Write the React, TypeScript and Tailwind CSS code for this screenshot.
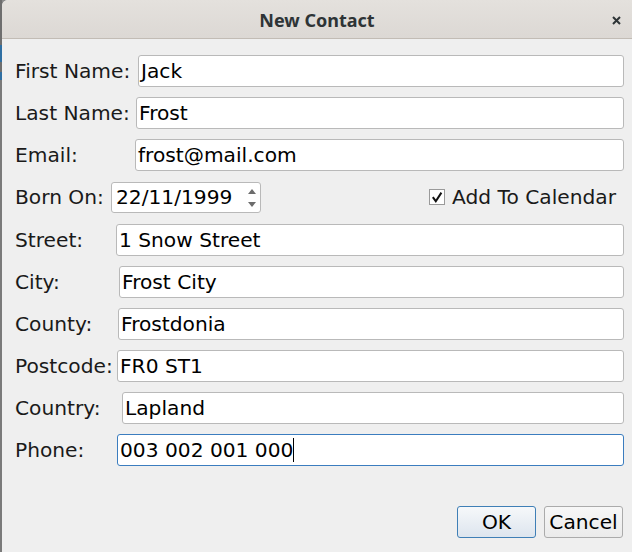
import React from 'react';

const font = { fontFamily: '"DejaVu Sans", "Noto Sans", sans-serif' };

interface FieldRowProps {
    label: string;
    value: string;
    labelClass: string;
    focused?: boolean;
}

function FieldRow({ label, value, labelClass, focused }: FieldRowProps) {
    return (
        <div className="flex items-center h-[32px]">
            <div className={`${labelClass} shrink-0 text-[20.2px] text-[#1a1a1a]`}>{label}</div>
            <div
                className={`flex-1 h-[32px] flex items-center bg-white rounded-[3px] pl-[2px] text-[20.2px] text-black whitespace-nowrap ${
                    focused ? 'border border-[#3b7dbf]' : 'border border-[#b9b9b9]'
                }`}
            >
                <span>{value}</span>
                {focused && <span className="inline-block w-[1px] h-[24px] bg-black" />}
            </div>
        </div>
    );
}

function DateRow() {
    return (
        <div className="flex items-center h-[33px]">
            <div className="w-[96px] shrink-0 text-[20.2px] text-[#1a1a1a]">Born On:</div>
            <div className="w-[150px] h-[31px] flex items-center bg-white border border-[#b9b9b9] rounded-[3px] pl-[4px] text-[20.2px] text-black">
                <span className="flex-1">22/11/1999</span>
                <div className="flex flex-col items-center gap-[8px] pr-[4px]">
                    <svg width="8" height="5" viewBox="0 0 8 5">
                        <polygon points="4,0 8,5 0,5" fill="#6c6c6c" />
                    </svg>
                    <svg width="8" height="5" viewBox="0 0 8 5">
                        <polygon points="0,0 8,0 4,5" fill="#6c6c6c" />
                    </svg>
                </div>
            </div>
            <div className="flex-1" />
            <div className="flex items-center gap-[7px] pr-[8px]">
                <div className="w-[16px] h-[16px] border border-[#9a9a9a] bg-white flex items-center justify-center">
                    <svg width="12" height="12" viewBox="0 0 12 12">
                        <path d="M1.8 6.2 L4.8 10.2 L10.4 1.6" stroke="#111" strokeWidth="2" fill="none" />
                    </svg>
                </div>
                <span className="text-[20.2px] text-[#1a1a1a]">Add To Calendar</span>
            </div>
        </div>
    );
}

export default function App() {
    return (
        <div className="w-[632px] h-[552px] flex bg-[#8a8a8a] overflow-hidden" style={font}>
            <div className="w-[2px] shrink-0 flex flex-col">
                <div className="h-[45px] bg-[#6e6e6e]" />
                <div className="h-[17px] bg-[#2f6fa3]" />
                <div className="h-[10px] bg-[#6e6e6e]" />
                <div className="h-[8px] bg-[#2f6fa3]" />
                <div className="flex-1 bg-[#7a7a7a]" />
            </div>
            <div className="flex-1 flex flex-col rounded-tl-[6px] overflow-hidden bg-[#efefef]">
                <div className="relative h-[39px] shrink-0 flex items-center justify-center pt-[3px] bg-gradient-to-b from-[#e4e1dd] to-[#dcd8d4] border-b border-[#c2bcb5]">
                    <span
                        className="text-[18px] font-bold text-[#2e3436]"
                        style={{ fontFamily: '"Noto Sans", "DejaVu Sans", sans-serif' }}
                    >
                        New Contact
                    </span>
                    <div className="absolute right-[11px] top-[16px]">
                        <svg width="9" height="9" viewBox="0 0 9 9">
                            <path d="M1 1 L8 8 M8 1 L1 8" stroke="#2e3436" strokeWidth="2" />
                        </svg>
                    </div>
                </div>

                <div className="flex-1 flex flex-col pt-[16px] pl-[13px] pr-[8px]">
                    <div className="flex flex-col gap-[10px]">
                        <FieldRow label="First Name:" value="Jack" labelClass="w-[123px]" />
                        <FieldRow label="Last Name:" value="Frost" labelClass="w-[121px]" />
                        <FieldRow label="Email:" value="frost@mail.com" labelClass="w-[120px]" />
                        <DateRow />
                        <FieldRow label="Street:" value="1 Snow Street" labelClass="w-[101px]" />
                        <FieldRow label="City:" value="Frost City" labelClass="w-[104px]" />
                        <FieldRow label="County:" value="Frostdonia" labelClass="w-[103px]" />
                        <FieldRow label="Postcode:" value="FR0 ST1" labelClass="w-[102px]" />
                        <FieldRow label="Country:" value="Lapland" labelClass="w-[107px]" />
                        <FieldRow label="Phone:" value="003 002 001 000" labelClass="w-[102px]" focused />
                    </div>

                    <div className="mt-auto flex justify-end gap-[8px] pb-[14px] pr-[1px]">
                        <button className="w-[79px] h-[32px] rounded-[3px] border border-[#3f7fb6] bg-gradient-to-b from-[#f6f8fa] to-[#dde5ee] text-[20.2px] text-black">
                            OK
                        </button>
                        <button className="w-[79px] h-[32px] rounded-[3px] border border-[#ababab] bg-gradient-to-b from-[#f7f7f7] to-[#ebebeb] text-[20.2px] text-black">
                            Cancel
                        </button>
                    </div>
                </div>
            </div>
        </div>
    );
}
